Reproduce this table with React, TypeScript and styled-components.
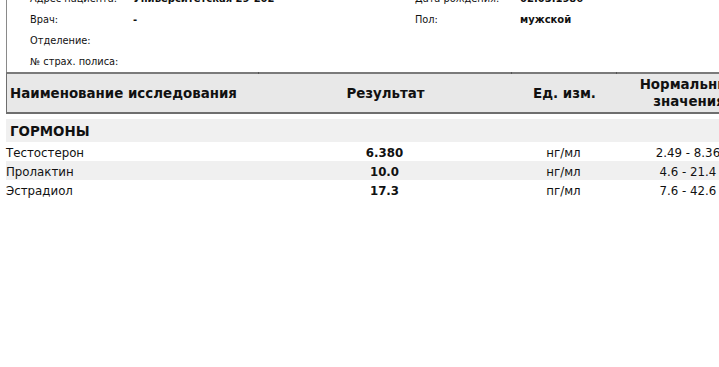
import React, { ReactElement } from 'react';
import styled, { createGlobalStyle } from 'styled-components';

const GlobalStyle = createGlobalStyle`
  html, body {
    background: #ffffff;
    margin: 0;
    overflow: hidden;
  }

  body {
    color: #111111;
    font-family: "DejaVu Sans", Verdana, sans-serif;
  }
`;

const Page = styled.div`
  display: flex;
  flex-direction: column;
  padding-left: 6px;
  width: 760px;
`;

const InfoBox = styled.div`
  border-left: 1px solid #8a8a8a;
  display: grid;
  grid-auto-rows: 21px;
  grid-template-columns: 103px 282px 105px 1fr;
  margin-top: -12px;
  padding-left: 23px;
`;

const InfoCell = styled.div<{ $bold?: boolean }>`
  align-items: center;
  display: flex;
  font-size: ${({ $bold }) => ($bold ? '10px' : '9.8px')};
  font-weight: ${({ $bold }) => ($bold ? 700 : 400)};
  white-space: nowrap;
`;

const Columns = `
  display: grid;
  grid-template-columns: 252px 253px 105px 144px;
`;

const HeaderRow = styled.div`
  ${Columns}
  background: #e8e8e8;
  border-bottom: 2px solid #6e6e6e;
  border-left: 1px solid #6e6e6e;
  border-top: 2px solid #7a7a7a;
  height: 38px;
`;

const HeaderCell = styled.div<{ $align?: string; $tick?: boolean }>`
  align-items: center;
  display: flex;
  font-size: 13.4px;
  font-weight: 700;
  justify-content: ${({ $align }) => $align || 'center'};
  line-height: 17px;
  padding-left: ${({ $align }) => ($align ? '3px' : '0')};
  position: relative;
  text-align: center;

  &::before {
    background: #555555;
    content: '';
    display: ${({ $tick }) => ($tick ? 'block' : 'none')};
    height: 2px;
    left: -1px;
    position: absolute;
    top: -2px;
    width: 1px;
  }
`;

const GroupRow = styled.div`
  align-items: center;
  background: #f0f0f0;
  display: flex;
  font-size: 13.4px;
  font-weight: 700;
  height: 22px;
  margin-top: 5px;
  padding-left: 4px;
  padding-top: 1px;
`;

const DataRow = styled.div<{ $shaded?: boolean }>`
  ${Columns}
  align-items: center;
  background: ${({ $shaded }) => ($shaded ? '#f0f0f0' : 'transparent')};
  box-sizing: border-box;
  font-size: 11.8px;
  height: 19px;
  padding-top: 2px;
`;

const NameCell = styled.div`
  white-space: nowrap;
`;

const ValueCell = styled.div<{ $bold?: boolean }>`
  font-weight: ${({ $bold }) => ($bold ? 700 : 400)};
  text-align: center;
  white-space: nowrap;
`;

const info: [string, string, string, string][] = [
  ['Адрес пациента:', 'Университетская 29-202', 'Дата рождения:', '02.03.1986'],
  ['Врач:', '-', 'Пол:', 'мужской'],
  ['Отделение:', '', '', ''],
  ['№ страх. полиса:', '', '', ''],
];

const results = [
  { name: 'Тестостерон', value: '6.380', unit: 'нг/мл', norm: '2.49 - 8.36' },
  { name: 'Пролактин', value: '10.0', unit: 'нг/мл', norm: '4.6 - 21.4' },
  { name: 'Эстрадиол', value: '17.3', unit: 'пг/мл', norm: '7.6 - 42.6' },
];

const App = (): ReactElement => (
  <>
    <GlobalStyle />
    <Page>
      <InfoBox>
        {info.map((row) => (
          <React.Fragment key={row[0]}>
            <InfoCell>{row[0]}</InfoCell>
            <InfoCell $bold>{row[1]}</InfoCell>
            <InfoCell>{row[2]}</InfoCell>
            <InfoCell $bold>{row[3]}</InfoCell>
          </React.Fragment>
        ))}
      </InfoBox>
      <HeaderRow>
        <HeaderCell $align="flex-start">Наименование исследования</HeaderCell>
        <HeaderCell $tick>Результат</HeaderCell>
        <HeaderCell $tick>Ед. изм.</HeaderCell>
        <HeaderCell $tick>Нормальные<br />значения</HeaderCell>
      </HeaderRow>
      <GroupRow>ГОРМОНЫ</GroupRow>
      {results.map((r, i) => (
        <DataRow key={r.name} $shaded={i % 2 === 1}>
          <NameCell>{r.name}</NameCell>
          <ValueCell $bold>{r.value}</ValueCell>
          <ValueCell>{r.unit}</ValueCell>
          <ValueCell>{r.norm}</ValueCell>
        </DataRow>
      ))}
    </Page>
  </>
);

export default App;
